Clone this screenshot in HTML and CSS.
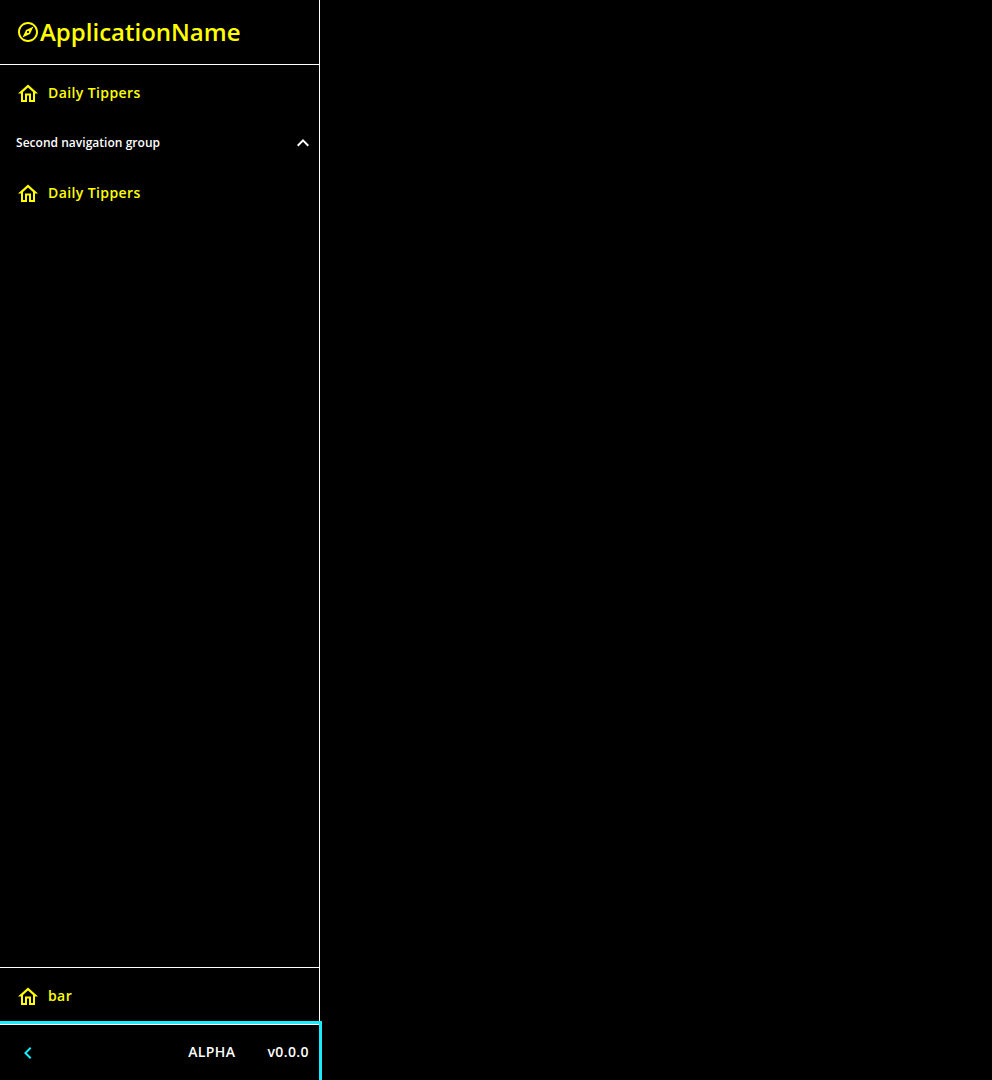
FILE: index.html
```html
<!DOCTYPE html>
<html lang="en">
<head>
<meta charset="utf-8">
<title>ApplicationName</title>
<link rel="stylesheet" href="styles.css">
</head>
<body>
<svg class="sprite" aria-hidden="true">
  <symbol id="home" viewBox="0 0 24 24"><path d="M12 5.400l5 4.500V18h-2v-6.500H9V18H7v-8.100l5-4.500M12 2.600L2 11.600h3V20h6v-6.500h2V20h6v-8.400h3L12 2.600z"/></symbol>
</svg>
<aside class="sidebar">
  <header class="brand">
    <svg class="icon" viewBox="0 0 24 24"><path d="M12 2C6.480 2 2 6.480 2 12s4.480 10 10 10 10-4.480 10-10S17.520 2 12 2zm0 18c-4.410 0-8-3.590-8-8s3.590-8 8-8 8 3.590 8 8-3.590 8-8 8zm-5.500-2.500l7.510-3.490L17.500 6.500 9.990 9.990 6.500 17.500zm5.500-6.600c.610 0 1.100.490 1.100 1.100s-.490 1.100-1.100 1.100-1.100-.490-1.100-1.100.490-1.100 1.100-1.100z"/></svg>
    <span class="brand-name">ApplicationName</span>
  </header>
  <nav class="nav">
    <a class="item"><svg class="icon"><use href="#home"/></svg><span>Daily Tippers</span></a>
    <div class="group">
      <span>Second navigation group</span>
      <svg class="icon" viewBox="0 0 24 24"><path d="M12 8l-6 6 1.410 1.410L12 10.830l4.590 4.580L18 14z"/></svg>
    </div>
    <a class="item"><svg class="icon"><use href="#home"/></svg><span>Daily Tippers</span></a>
  </nav>
  <div class="bottom-nav">
    <a class="item"><svg class="icon"><use href="#home"/></svg><span>bar</span></a>
  </div>
  <footer class="footer">
    <svg class="icon" viewBox="0 0 24 24"><path d="M15.410 7.410L14 6l-6 6 6 6 1.410-1.410L10.830 12z"/></svg>
    <span class="stage">ALPHA</span>
    <span class="version">v0.0.0</span>
  </footer>
</aside>
</body>
</html>
```
FILE: styles.css
```css
* { box-sizing: border-box; }
body {
  margin: 0;
  height: 100vh;
  overflow: hidden;
  background: #000;
  color: #fff;
  font-family: "Open Sans", sans-serif;
  font-weight: 600;
}
.sprite { display: none; }
.sidebar {
  display: flex;
  flex-direction: column;
  width: 320px;
  height: 100vh;
  border-right: 1px solid #fff;
}
.icon {
  flex: none;
  width: 24px;
  height: 24px;
  fill: currentColor;
}
.brand {
  display: flex;
  align-items: center;
  height: 65px;
  padding-left: 16px;
  border-bottom: 1px solid #fff;
  color: #ff0;
}
.brand-name {
  font-size: 24px;
  line-height: 32px;
}
.nav { flex: 1; }
.item {
  display: flex;
  align-items: center;
  gap: 8px;
  height: 56px;
  padding-left: 16px;
  color: #ff0;
  font-size: 14px;
  line-height: 20px;
  letter-spacing: 0.4px;
}
.item .icon { margin-top: 2px; }
.group {
  display: flex;
  align-items: center;
  justify-content: space-between;
  height: 44px;
  padding: 0 4px 0 16px;
  font-size: 12px;
  line-height: 16px;
  letter-spacing: 0.03px;
}
.bottom-nav {
  height: 57px;
  border-top: 1px solid #fff;
}
.footer {
  display: flex;
  align-items: center;
  height: 56px;
  padding: 0 10px 0 16px;
  border-top: 1px solid #fff;
  outline: 3px solid #1aebff;
  font-size: 14px;
  line-height: 20px;
  letter-spacing: 0.4px;
}
.footer span { padding-bottom: 1px; }
.footer .icon { color: #1aebff; }
.stage { margin-left: auto; }
.version { margin-left: 32px; }
```
